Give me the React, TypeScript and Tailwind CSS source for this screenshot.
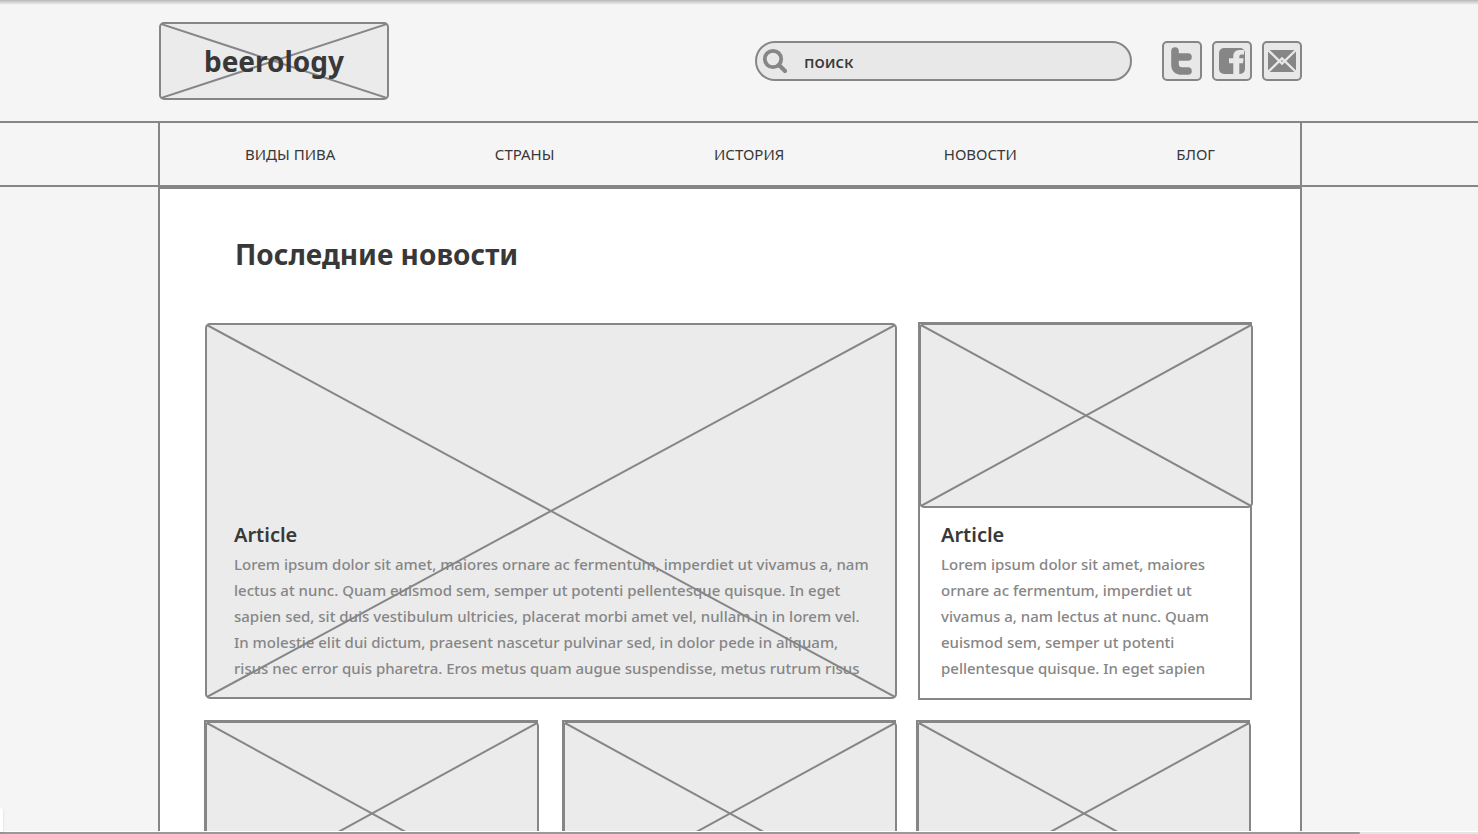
import type { ReactNode } from "react";

const navItems = ["ВИДЫ ПИВА", "СТРАНЫ", "ИСТОРИЯ", "НОВОСТИ", "БЛОГ"];

const leadText = [
  "Lorem ipsum dolor sit amet, maiores ornare ac fermentum, imperdiet ut vivamus a, nam",
  "lectus at nunc. Quam euismod sem, semper ut potenti pellentesque quisque. In eget",
  "sapien sed, sit duis vestibulum ultricies, placerat morbi amet vel, nullam in in lorem vel.",
  "In molestie elit dui dictum, praesent nascetur pulvinar sed, in dolor pede in aliquam,",
  "risus nec error quis pharetra. Eros metus quam augue suspendisse, metus rutrum risus",
];

const sideText = [
  "Lorem ipsum dolor sit amet, maiores",
  "ornare ac fermentum, imperdiet ut",
  "vivamus a, nam lectus at nunc. Quam",
  "euismod sem, semper ut potenti",
  "pellentesque quisque. In eget sapien",
];

function Cross() {
  return (
    <svg
      className="absolute inset-0 h-full w-full"
      viewBox="0 0 100 100"
      preserveAspectRatio="none"
      stroke="#868686"
      strokeWidth="2"
      aria-hidden="true"
    >
      <path d="M0 0 L100 100 M100 0 L0 100" vectorEffect="non-scaling-stroke" />
    </svg>
  );
}

function Placeholder({ className = "", children }: { className?: string; children?: ReactNode }) {
  return (
    <div className={`relative rounded-[5px] border-2 border-[#868686] bg-[#ebebeb] ${className}`}>
      <Cross />
      {children}
    </div>
  );
}

function ArticleText({ lines }: { lines: string[] }) {
  return (
    <>
      <h2 className="text-[20px] leading-8 font-semibold text-[#383838]">Article</h2>
      <p className="text-[15px] leading-[26px] font-medium whitespace-nowrap text-[#868686]">
        {lines.map((line) => (
          <span key={line} className="block">
            {line}
          </span>
        ))}
      </p>
    </>
  );
}

function Card({ children }: { children?: ReactNode }) {
  return (
    <article className="min-w-0 border-2 border-[#868686] bg-white">
      <Placeholder className="-mt-px -mr-[3px] -ml-px h-[185px]" />
      {children && <div className="px-[21px] pt-[11px] pb-[17px]">{children}</div>}
    </article>
  );
}

function SocialLink({ label, children }: { label: string; children: ReactNode }) {
  return (
    <a
      href="#"
      aria-label={label}
      className="block size-10 rounded-[5px] border-2 border-[#868686] bg-[#e8e8e8]"
    >
      <svg viewBox="2 2 36 36" className="size-full" aria-hidden="true">
        {children}
      </svg>
    </a>
  );
}

export default function App() {
  return (
    <div className="flex h-screen flex-col bg-[#f5f5f5] font-['Noto_Sans','Open_Sans',sans-serif] text-[#383838]">
      <div className="relative min-h-0 flex-1 overflow-x-hidden overflow-y-auto [scrollbar-width:none]">
        <div className="absolute inset-x-0 top-0 h-[5px] bg-linear-to-b from-[#b8b8b8] to-[#f5f5f5]" />

        <header className="border-b-2 border-[#868686] pr-[18px]">
          <div className="mx-auto flex max-w-[1144px] items-center pt-[22px] pb-[21px] pl-px">
            <Placeholder className="flex h-[78px] w-[230px] items-center justify-center">
              <a href="#" className="relative text-[28px] font-bold">
                beerology
              </a>
            </Placeholder>
            <form
              className="relative mr-[30px] ml-auto w-[377px]"
              onSubmit={(event) => event.preventDefault()}
            >
              <input
                id="search"
                type="search"
                aria-label="поиск"
                placeholder="поиск"
                className="h-10 w-full rounded-full border-2 border-[#868686] bg-[#e8e8e8] pr-5 pl-[47px] text-[17px] font-medium text-[#383838] outline-none placeholder:text-[#383838] placeholder:opacity-100"
              />
              <label htmlFor="search" className="absolute top-[7px] left-[7px]">
                <svg
                  viewBox="0 0 26 26"
                  className="size-[26px]"
                  fill="none"
                  stroke="#868686"
                  aria-hidden="true"
                >
                  <circle cx="11" cy="11" r="8.2" strokeWidth="3.8" />
                  <path d="M17 17 L23 23" strokeWidth="4.2" strokeLinecap="round" />
                </svg>
              </label>
            </form>
            <div className="flex gap-2.5">
              <SocialLink label="Twitter">
                <path
                  d="M13 10 V23 Q13 30 20 30 H26 M13 16 H26"
                  fill="none"
                  stroke="#868686"
                  strokeWidth="7.6"
                  strokeLinecap="round"
                  strokeLinejoin="round"
                />
              </SocialLink>
              <SocialLink label="Facebook">
                <rect x="7" y="7" width="26" height="26" rx="5" fill="#868686" />
                <path
                  d="M21.3 33 V22.3 H17 V17.3 H21.3 V15.5 Q21.3 9 27.3 9 H32 V13.5 H29.3 Q27.3 13.5 27.3 15.5 V17.3 H31.6 L31 22.3 H27.3 V33 Z"
                  fill="#e8e8e8"
                />
              </SocialLink>
              <SocialLink label="E-mail">
                <rect x="6" y="9" width="28" height="22" fill="#868686" />
                <path
                  d="M6 9 L20 22.6 L34 9 M6 31 L20 17.4 L34 31"
                  fill="none"
                  stroke="#e8e8e8"
                  strokeWidth="2.3"
                />
              </SocialLink>
            </div>
          </div>
        </header>

        <nav className="border-b-2 border-[#868686] pr-[18px]">
          <ul className="mx-auto flex max-w-[1144px] justify-between border-x-2 border-[#868686] px-[85px] text-[15px] leading-[62px]">
            {navItems.map((item) => (
              <li key={item}>
                <a href="#">{item}</a>
              </li>
            ))}
          </ul>
        </nav>

        <div className="pr-[18px]">
          <main className="mx-auto max-w-[1144px] border-2 border-[#868686] bg-white pb-11">
            <h1 className="px-[75px] pt-[43px] text-[28px] leading-11 font-bold">
              Последние новости
            </h1>

            <div className="mt-[46px] mr-12 ml-[45px] grid grid-cols-[692fr_334fr] items-center gap-x-[21px]">
              <Placeholder className="min-w-0 px-[27px] pt-[194px] pb-4">
                <div className="relative">
                  <ArticleText lines={leadText} />
                </div>
              </Placeholder>
              <Card>
                <ArticleText lines={sideText} />
              </Card>
            </div>

            <div className="mt-5 mr-[50px] ml-11 grid grid-cols-[692fr_334fr] gap-5">
              <div className="grid min-w-0 grid-cols-2 gap-6">
                <Card />
                <Card />
              </div>
              <Card />
            </div>
          </main>
        </div>
      </div>

      <div className="relative border-t border-white bg-[#e4e4e4]">
        <div className="h-0.5 w-[92%] rounded-r-full bg-[#999999]" />
        <div className="absolute bottom-0.5 left-0 h-6 w-[3px] rounded-tr bg-white shadow-sm" />
      </div>
    </div>
  );
}
